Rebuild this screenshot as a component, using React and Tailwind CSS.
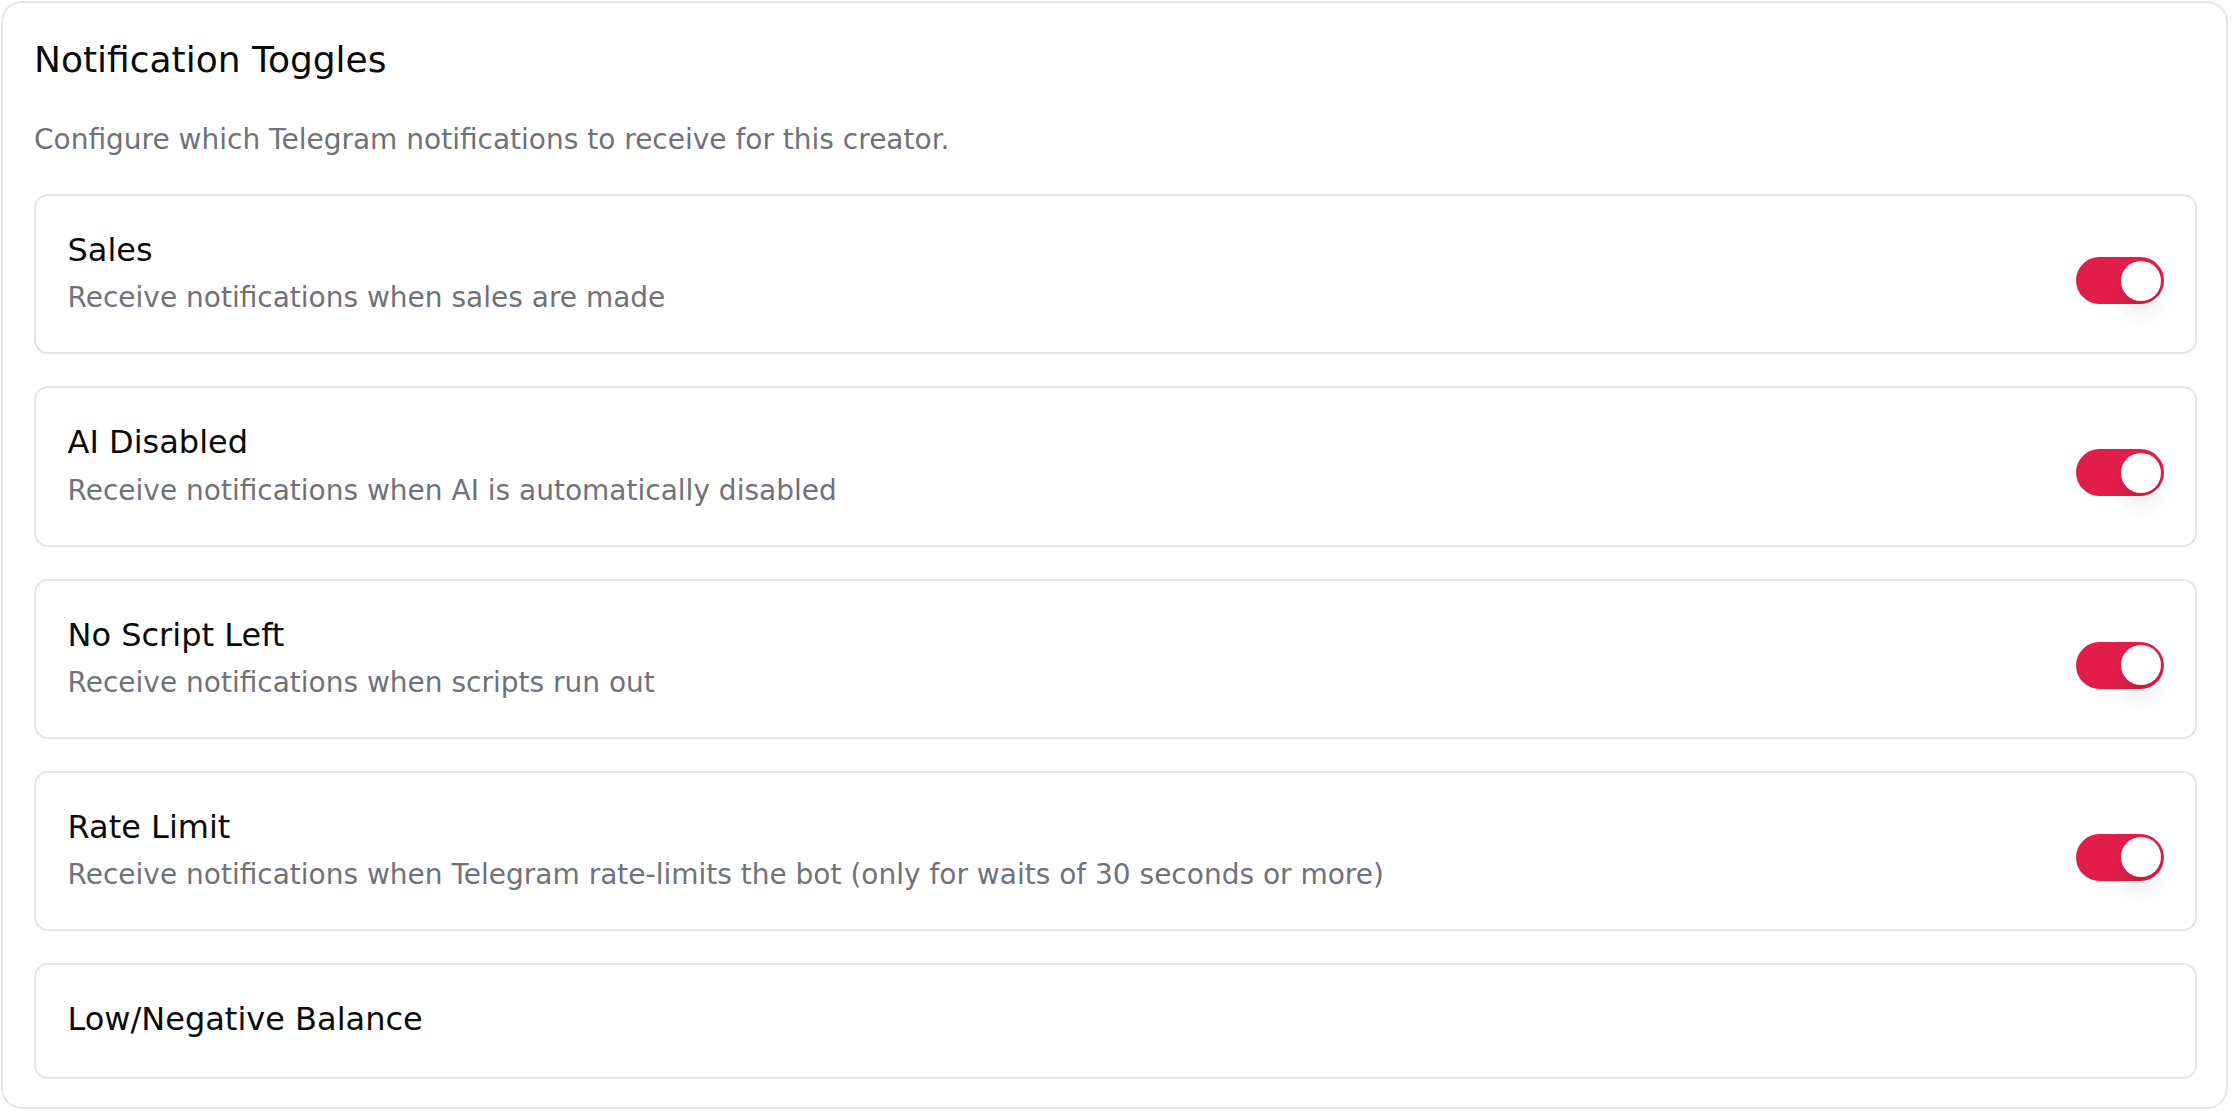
import React from "react";

const items = [
  { title: "Sales", desc: "Receive notifications when sales are made", on: true },
  { title: "AI Disabled", desc: "Receive notifications when AI is automatically disabled", on: true },
  { title: "No Script Left", desc: "Receive notifications when scripts run out", on: true },
  {
    title: "Rate Limit",
    desc: "Receive notifications when Telegram rate-limits the bot (only for waits of 30 seconds or more)",
    on: true,
  },
  { title: "Low/Negative Balance", desc: null, on: false },
];

const Toggle = () => (
  <div className="mt-[31px] flex h-[47px] w-[88px] shrink-0 items-center justify-end rounded-full bg-[#e11d48] p-[3.5px]">
    <span className="block h-[40px] w-[40px] rounded-full bg-white shadow-[0_16px_24px_-6px_rgba(0,0,0,0.13),0_6px_10px_-5px_rgba(0,0,0,0.08)]" />
  </div>
);

export default function App() {
  return (
    <div
      className="h-[1112px] w-[2232px] bg-white pl-px pt-px"
      style={{ fontFamily: '"DejaVu Sans", sans-serif' }}
    >
      <div className="h-[1108px] w-[2227px] overflow-hidden rounded-[21px] border-2 border-[#e5e5e7] pl-[31px] pr-[29px] pt-[31.5px]">
        {/* Header */}
        <h2 className="text-[36px] leading-[49px] text-[#0a0a0a]">Notification Toggles</h2>
        <p className="mt-[35px] text-[28px] leading-[42px] text-[#71717a]">
          Configure which Telegram notifications to receive for this creator.
        </p>

        {/* Toggle cards */}
        <div className="mt-[33.5px] flex flex-col gap-[32px]">
          {items.map((it) => (
            <div
              key={it.title}
              className="flex items-start justify-between rounded-[14px] border-2 border-[#e5e5e7] pb-[33px] pl-[31.5px] pr-[31px] pt-[30px]"
            >
              <div>
                <div className="text-[32px] leading-[49px] text-[#0a0a0a]">{it.title}</div>
                {it.desc && (
                  <div className="mt-[2.3px] text-[28px] leading-[42px] text-[#71717a]">{it.desc}</div>
                )}
              </div>
              {it.on && <Toggle />}
            </div>
          ))}
        </div>
      </div>
    </div>
  );
}
